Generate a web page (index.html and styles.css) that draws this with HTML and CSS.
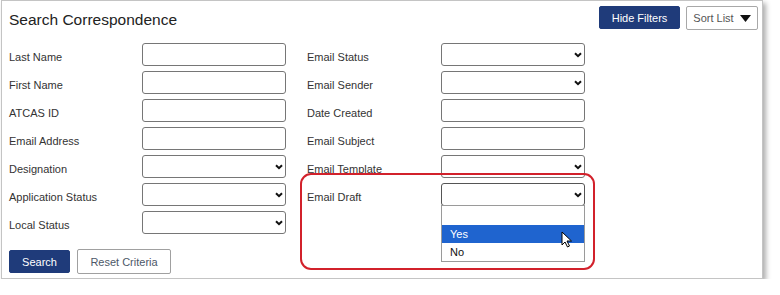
FILE: index.html
```html
<!DOCTYPE html>
<html>
<head>
<meta charset="utf-8">
<link rel="stylesheet" href="styles.css">
</head>
<body>
<div class="frame">
  <div class="header">
    <h1 class="title">Search Correspondence</h1>
    <div class="actions">
      <button class="btn btn-primary btn-hide">Hide Filters</button>
      <button class="btn btn-sort">Sort List <svg class="caret" width="11" height="7" viewBox="0 0 11 7"><path d="M0 0H11L5.5 7Z" fill="#111"/></svg></button>
    </div>
  </div>

  <div class="form">
    <div class="col col-left">
      <label>Last Name</label><span class="field"><input class="ctl" type="text"></span>
      <label>First Name</label><span class="field"><input class="ctl" type="text"></span>
      <label>ATCAS ID</label><span class="field"><input class="ctl" type="text"></span>
      <label>Email Address</label><span class="field"><input class="ctl" type="text"></span>
      <label>Designation</label><span class="field"><span class="ctl sel"></span><svg class="chev" width="8" height="6" viewBox="0 0 8 6"><path d="M1 1.2L4 4.2L7 1.2" fill="none" stroke="#111" stroke-width="2"/></svg></span>
      <label>Application Status</label><span class="field"><span class="ctl sel"></span><svg class="chev" width="8" height="6" viewBox="0 0 8 6"><path d="M1 1.2L4 4.2L7 1.2" fill="none" stroke="#111" stroke-width="2"/></svg></span>
      <label>Local Status</label><span class="field"><span class="ctl sel"></span><svg class="chev" width="8" height="6" viewBox="0 0 8 6"><path d="M1 1.2L4 4.2L7 1.2" fill="none" stroke="#111" stroke-width="2"/></svg></span>
    </div>
    <div class="col col-right">
      <label>Email Status</label><span class="field"><span class="ctl sel"></span><svg class="chev" width="8" height="6" viewBox="0 0 8 6"><path d="M1 1.2L4 4.2L7 1.2" fill="none" stroke="#111" stroke-width="2"/></svg></span>
      <label>Email Sender</label><span class="field"><span class="ctl sel"></span><svg class="chev" width="8" height="6" viewBox="0 0 8 6"><path d="M1 1.2L4 4.2L7 1.2" fill="none" stroke="#111" stroke-width="2"/></svg></span>
      <label>Date Created</label><span class="field"><input class="ctl" type="text"></span>
      <label>Email Subject</label><span class="field"><input class="ctl" type="text"></span>
      <label>Email Template</label><span class="field"><span class="ctl sel"></span><svg class="chev" width="8" height="6" viewBox="0 0 8 6"><path d="M1 1.2L4 4.2L7 1.2" fill="none" stroke="#111" stroke-width="2"/></svg></span>
      <label>Email Draft</label><span class="field"><span class="ctl sel sel-open"></span><svg class="chev" width="8" height="6" viewBox="0 0 8 6"><path d="M1 1.2L4 4.2L7 1.2" fill="none" stroke="#111" stroke-width="2"/></svg>
        <ul class="options">
          <li class="opt opt-blank"></li>
          <li class="opt opt-active">Yes</li>
          <li class="opt">No</li>
        </ul>
        <svg class="cursor" width="12" height="17" viewBox="0 0 12 17"><path d="M1 1V14L4 11L6.5 16L8.5 15L6 10H10.5Z" fill="#fff" stroke="#000" stroke-width="1" stroke-linejoin="round"/></svg>
      </span>
    </div>
    <div class="highlight"></div>
  </div>

  <div class="footer">
    <button class="btn btn-primary btn-search">Search</button>
    <button class="btn btn-reset">Reset Criteria</button>
  </div>
</div>
</body>
</html>
```

FILE: styles.css
```css
html, body {
  margin: 0;
  padding: 0;
  background: #fff;
}
body {
  font-family: "Liberation Sans", Arial, sans-serif;
  color: #333;
}
.frame {
  position: relative;
  margin-left: 1px;
  width: 762px;
  height: 279px;
  box-sizing: border-box;
  border: 1px solid #c4c4c4;
  box-shadow: 3px 3px 5px rgba(0, 0, 0, 0.32);
  padding: 5px 4px 0 7px;
}
.header {
  display: flex;
  justify-content: space-between;
  align-items: flex-start;
}
.title {
  margin: 5px 0 0 0;
  font-size: 15.5px;
  line-height: 18px;
  font-weight: normal;
  color: #222;
}
.actions {
  display: flex;
  gap: 6px;
  align-items: flex-start;
}
.btn {
  font-family: "Liberation Sans", Arial, sans-serif;
  font-size: 11px;
  margin: 0;
  box-sizing: border-box;
  border-radius: 2px;
  cursor: pointer;
}
.btn-primary {
  background: #1f3b7a;
  color: #fff;
  border: 1px solid #1f3b7a;
}
.btn-hide {
  width: 81px;
  height: 23px;
}
.btn-sort {
  width: 72px;
  height: 24px;
  background: #fff;
  color: #555;
  border: 1px solid #a8a8a8;
  display: flex;
  align-items: center;
  justify-content: center;
  gap: 6px;
  padding: 0;
}
.caret {
  display: block;
}
.form {
  position: relative;
  display: flex;
  gap: 21px;
  margin-top: 13px;
}
.col {
  display: grid;
  grid-auto-rows: 23px;
  row-gap: 5px;
  align-items: center;
}
.col-left {
  grid-template-columns: 133px 144px;
}
.col-right {
  grid-template-columns: 134px 144px;
}
label {
  font-size: 11px;
  color: #333;
  margin-top: 4px;
}
.field {
  position: relative;
  display: block;
  height: 23px;
}
.ctl {
  display: block;
  width: 144px;
  height: 23px;
  box-sizing: border-box;
  border: 1px solid #767676;
  border-radius: 3px;
  background: #fff;
  margin: 0;
  padding: 0 4px;
  outline: none;
}
.sel-open {
  border-color: #555;
}
.chev {
  position: absolute;
  right: 3px;
  top: 9px;
}
.options {
  position: absolute;
  left: 0;
  top: 22px;
  width: 144px;
  box-sizing: border-box;
  margin: 0;
  padding: 0;
  list-style: none;
  background: #fff;
  border: 1px solid #9a9a9a;
  z-index: 2;
}
.opt {
  height: 18px;
  line-height: 18px;
  padding-left: 8px;
  font-size: 11px;
  color: #111;
}
.opt-blank {
  height: 19px;
}
.opt-active {
  background: #1f64cf;
  color: #fff;
}
.cursor {
  position: absolute;
  left: 120px;
  top: 48px;
  z-index: 3;
}
.highlight {
  position: absolute;
  left: 291px;
  top: 130px;
  width: 295px;
  height: 97px;
  box-sizing: border-box;
  border: 2px solid #d2212b;
  border-radius: 11px;
  pointer-events: none;
  z-index: 1;
}
.footer {
  display: flex;
  gap: 7px;
  margin-top: 16px;
  align-items: flex-start;
}
.btn-search {
  width: 61px;
  height: 23px;
}
.btn-reset {
  width: 94px;
  height: 25px;
  margin-top: -1px;
  background: #fff;
  color: #4d5868;
  border: 1px solid #a0a0a0;
}
```
